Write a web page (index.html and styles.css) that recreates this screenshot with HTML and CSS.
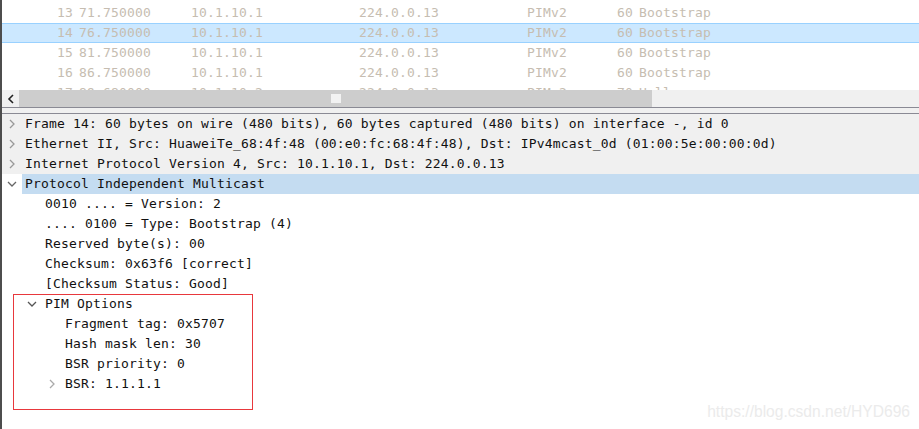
FILE: index.html
```html
<!DOCTYPE html>
<html lang="en">
<head>
    <meta charset="UTF-8">
    <meta name="viewport" content="width=device-width, initial-scale=1.0">
    <title>PIM Bootstrap</title>
    <link rel="stylesheet" href="styles.css">
</head>
<body>
    <div class="app">
        <div class="packetList">
            <div class="packet">
                <span class="no">13</span><span class="time">71.750000</span><span class="src">10.1.10.1</span><span class="dst">224.0.0.13</span><span class="proto">PIMv2</span><span class="len">60</span><span class="info">Bootstrap</span>
            </div>
            <div class="packet selected">
                <span class="no">14</span><span class="time">76.750000</span><span class="src">10.1.10.1</span><span class="dst">224.0.0.13</span><span class="proto">PIMv2</span><span class="len">60</span><span class="info">Bootstrap</span>
            </div>
            <div class="packet">
                <span class="no">15</span><span class="time">81.750000</span><span class="src">10.1.10.1</span><span class="dst">224.0.0.13</span><span class="proto">PIMv2</span><span class="len">60</span><span class="info">Bootstrap</span>
            </div>
            <div class="packet">
                <span class="no">16</span><span class="time">86.750000</span><span class="src">10.1.10.1</span><span class="dst">224.0.0.13</span><span class="proto">PIMv2</span><span class="len">60</span><span class="info">Bootstrap</span>
            </div>
            <div class="packet">
                <span class="no">17</span><span class="time">89.680000</span><span class="src">10.1.10.2</span><span class="dst">224.0.0.13</span><span class="proto">PIMv2</span><span class="len">70</span><span class="info">Hello</span>
            </div>
        </div>

        <div class="hscroll">
            <div class="arrowBtn">
                <svg width="8" height="10" viewBox="0 0 8 10"><polyline points="6,1 2,5 6,9" fill="none" stroke="#222" stroke-width="1.6"/></svg>
            </div>
            <div class="thumb"><span class="grip"></span></div>
            <div class="trough"></div>
        </div>

        <div class="splitter"></div>

        <div class="tree">
            <div class="node top">
                <span class="twisty"><svg width="10" height="10" viewBox="0 0 10 10"><polyline points="3,1 7,5 3,9" fill="none" stroke="#999" stroke-width="1.3"/></svg></span>
                <span class="label">Frame 14: 60 bytes on wire (480 bits), 60 bytes captured (480 bits) on interface -, id 0</span>
            </div>
            <div class="node top">
                <span class="twisty"><svg width="10" height="10" viewBox="0 0 10 10"><polyline points="3,1 7,5 3,9" fill="none" stroke="#999" stroke-width="1.3"/></svg></span>
                <span class="label">Ethernet II, Src: HuaweiTe_68:4f:48 (00:e0:fc:68:4f:48), Dst: IPv4mcast_0d (01:00:5e:00:00:0d)</span>
            </div>
            <div class="node top">
                <span class="twisty"><svg width="10" height="10" viewBox="0 0 10 10"><polyline points="3,1 7,5 3,9" fill="none" stroke="#999" stroke-width="1.3"/></svg></span>
                <span class="label">Internet Protocol Version 4, Src: 10.1.10.1, Dst: 224.0.0.13</span>
            </div>
            <div class="node selected">
                <span class="twisty"><svg width="10" height="10" viewBox="0 0 10 10"><polyline points="1,3 5,7 9,3" fill="none" stroke="#666" stroke-width="1.3"/></svg></span>
                <span class="label">Protocol Independent Multicast</span>
            </div>
            <div class="node lvl1"><span class="twisty"></span><span class="label">0010 .... = Version: 2</span></div>
            <div class="node lvl1"><span class="twisty"></span><span class="label">.... 0100 = Type: Bootstrap (4)</span></div>
            <div class="node lvl1"><span class="twisty"></span><span class="label">Reserved byte(s): 00</span></div>
            <div class="node lvl1"><span class="twisty"></span><span class="label">Checksum: 0x63f6 [correct]</span></div>
            <div class="node lvl1"><span class="twisty"></span><span class="label">[Checksum Status: Good]</span></div>
            <div class="node lvl1">
                <span class="twisty"><svg width="10" height="10" viewBox="0 0 10 10"><polyline points="1,3 5,7 9,3" fill="none" stroke="#555" stroke-width="1.3"/></svg></span>
                <span class="label">PIM Options</span>
            </div>
            <div class="node lvl2"><span class="twisty"></span><span class="label">Fragment tag: 0x5707</span></div>
            <div class="node lvl2"><span class="twisty"></span><span class="label">Hash mask len: 30</span></div>
            <div class="node lvl2"><span class="twisty"></span><span class="label">BSR priority: 0</span></div>
            <div class="node lvl2">
                <span class="twisty"><svg width="10" height="10" viewBox="0 0 10 10"><polyline points="3,1 7,5 3,9" fill="none" stroke="#aaa" stroke-width="1.3"/></svg></span>
                <span class="label">BSR: 1.1.1.1</span>
            </div>

            <div class="markBox"></div>
        </div>

        <div class="watermark">https://blog.csdn.net/HYD696</div>
    </div>
</body>
</html>
```

FILE: styles.css
```css
body{
    margin: 0;
    background: #fff;
    overflow: hidden;
}
.app{
    position: relative;
    width: 917px;
    height: 429px;
    border-left: 2px solid #4d4d4d;
    font-family: "DejaVu Sans Mono", monospace;
    font-size: 13px;
    letter-spacing: 0.17px;
    overflow: hidden;
}

/* packet list */
.packetList{
    height: 87px;
    padding-top: 3px;
    overflow: hidden;
    color: #c6bdb1;
}
.packet{
    display: flex;
    height: 20px;
    line-height: 20px;
    white-space: pre;
    box-sizing: border-box;
}
.packet.selected{
    background: #cce8ff;
    border-top: 1px solid #99d1ff;
    border-bottom: 1px solid #99d1ff;
    line-height: 18px;
}
.packet .no{
    width: 71px;
    text-align: right;
}
.packet .time{
    width: 112px;
    padding-left: 6px;
}
.packet .src{
    width: 168px;
}
.packet .dst{
    width: 168px;
}
.packet .proto{
    width: 90px;
}
.packet .len{
    width: 16px;
}
.packet .info{
    padding-left: 6px;
}

/* horizontal scrollbar */
.hscroll{
    display: flex;
    height: 17px;
    background: #f0f0f0;
}
.arrowBtn{
    width: 17px;
    display: flex;
    align-items: center;
    justify-content: center;
}
.thumb{
    width: 633px;
    background: #cdcdcd;
    display: flex;
    align-items: center;
    justify-content: center;
}
.grip{
    width: 10px;
    height: 9px;
    background: #f2f2f2;
}
.trough{
    flex: 1;
}

.splitter{
    height: 5px;
    background: #f0f0f0;
    border-top: 1px solid #8a8a94;
    border-bottom: 1px solid #8a8a94;
}

/* detail tree */
.tree{
    position: relative;
    color: #111;
}
.node{
    display: flex;
    height: 20px;
    line-height: 20px;
    white-space: pre;
}
.node.top{
    background: #f0f0f0;
}
.node.lvl1{
    padding-left: 20px;
}
.node.lvl2{
    padding-left: 40px;
}
.twisty{
    width: 20px;
    flex: none;
    display: flex;
    align-items: center;
    justify-content: center;
}
.label{
    flex: 1;
    padding-left: 3px;
}
.node.selected .label{
    background: #c4dcf1;
}

.markBox{
    position: absolute;
    left: 11px;
    top: 180px;
    width: 238px;
    height: 114px;
    border: 1px solid #e8383d;
}

.watermark{
    position: absolute;
    right: 9px;
    bottom: 8px;
    font-family: "Liberation Sans", Arial, sans-serif;
    font-size: 15.6px;
    letter-spacing: 0;
    color: #ebebeb;
}
```
